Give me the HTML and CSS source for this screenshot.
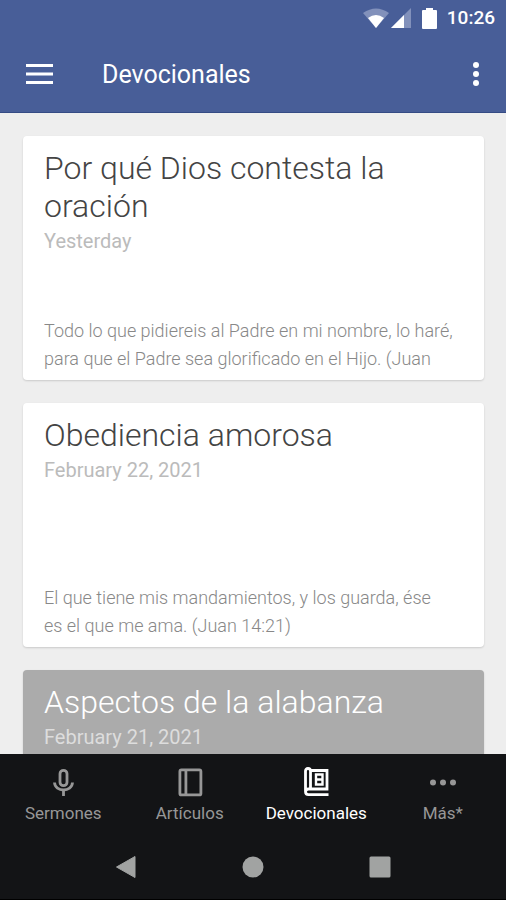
FILE: index.html
```html
<!DOCTYPE html>
<html lang="es">
<head>
<meta charset="utf-8">
<meta name="viewport" content="width=device-width, initial-scale=1">
<title>Devocionales</title>
<link rel="stylesheet" href="styles.css">
</head>
<body>
<header class="top">
  <div class="status">
    <svg class="status-wifi" viewBox="0 0 26 20" aria-hidden="true"><path d="M0 5Q13-4 26 5L13 20Z" fill="#8291bb"/><path d="M5 10Q13 4 21 10L13 20Z" fill="#fff"/></svg>
    <svg class="status-signal" viewBox="0 0 20 20" aria-hidden="true"><path d="M0 20L20 0V20Z" fill="#8291bb"/><path d="M0 20L13 7V20Z" fill="#fff"/></svg>
    <svg class="status-battery" viewBox="0 0 15 21" aria-hidden="true"><path d="M4 0H11V2H14Q15 2 15 3V20Q15 21 14 21H1Q0 21 0 20V3Q0 2 1 2H4Z" fill="#fff"/></svg>
    <span class="clock">10:26</span>
  </div>
  <div class="appbar">
    <button class="icon-button" aria-label="Menu"><svg class="icon-menu" viewBox="0 0 27 20" aria-hidden="true"><path d="M0 1.5H27M0 10H27M0 18.5H27" stroke="#fff" stroke-width="3"/></svg></button>
    <h1 class="title">Devocionales</h1>
    <button class="icon-button" aria-label="Opciones"><svg class="icon-more" viewBox="0 0 6 24" aria-hidden="true"><g fill="#fff"><circle cx="3" cy="3" r="3"/><circle cx="3" cy="12" r="3"/><circle cx="3" cy="21" r="3"/></g></svg></button>
  </div>
</header>
<main class="list">
  <article class="card">
    <h2 class="card-title">Por qué Dios contesta la oración</h2>
    <p class="card-date">Yesterday</p>
    <p class="card-text">Todo lo que pidiereis al Padre en mi nombre, lo haré, para que el Padre sea glorificado en el Hijo. (Juan</p>
  </article>
  <article class="card">
    <h2 class="card-title">Obediencia amorosa</h2>
    <p class="card-date">February 22, 2021</p>
    <p class="card-text">El que tiene mis mandamientos, y los guarda, ése<br>es el que me ama. (Juan 14:21)</p>
  </article>
  <article class="card card-dark">
    <h2 class="card-title">Aspectos de la alabanza</h2>
    <p class="card-date">February 21, 2021</p>
  </article>
</main>
<footer class="bottom">
  <nav class="tabs">
    <a class="tab" href="#sermones">
      <svg class="tab-icon" viewBox="0 0 32 32" fill="none" stroke="currentColor" stroke-width="2.800" aria-hidden="true"><rect x="13" y="4.300" width="7" height="15.400" rx="3.500"/><path d="M7.500 16.500C8 26.500 25 26.500 25.500 16.500M16.500 24V30"/></svg>
      <span>Sermones</span></a>
    <a class="tab" href="#articulos">
      <svg class="tab-icon" viewBox="0 0 32 32" fill="none" stroke="currentColor" stroke-width="2.800" aria-hidden="true"><rect x="5.900" y="3.900" width="21" height="25" rx="1.500"/><path d="M11.900 4V29"/></svg>
      <span>Artículos</span></a>
    <a class="tab tab-active" href="#devocionales">
      <svg class="tab-icon" viewBox="0 0 32 32" fill="none" stroke="currentColor" stroke-width="2.800" aria-hidden="true"><path d="M28.500 28.600H8.500Q5.500 28.600 5.500 25.500V5Q5.500 2.500 8 2.500Q10.500 2.500 10.500 5V22.500M10.500 4.500H27V23H8.500Q5.500 23 5.500 26"/><path d="M16 8.500H22.500V18.500H16ZM16 13.500H22" stroke-width="2.400"/></svg>
      <span>Devocionales</span></a>
    <a class="tab" href="#mas">
      <svg class="tab-icon" viewBox="0 0 32 32" fill="currentColor" aria-hidden="true"><circle cx="6" cy="16.500" r="3"/><circle cx="16" cy="16.500" r="3"/><circle cx="26" cy="16.500" r="3"/></svg>
      <span>Más*</span></a>
  </nav>
  <div class="system">
    <button class="system-button" aria-label="Atrás"><svg class="system-icon" viewBox="0 0 24 24" aria-hidden="true"><path d="M2.500 12L21 1.500V22.500Z" fill="currentColor" stroke="currentColor" stroke-linejoin="round"/></svg></button>
    <button class="system-button" aria-label="Inicio"><svg class="system-icon" viewBox="0 0 24 24" aria-hidden="true"><circle cx="12" cy="12" r="10.500" fill="currentColor"/></svg></button>
    <button class="system-button" aria-label="Recientes"><svg class="system-icon" viewBox="0 0 24 24" aria-hidden="true"><rect x="1.500" y="1.500" width="21" height="21" rx="1.500" fill="currentColor"/></svg></button>
  </div>
</footer>
</body>
</html>
```
FILE: styles.css
```css
* { box-sizing: border-box; }
body {
  margin: 0;
  height: 100vh;
  display: flex;
  flex-direction: column;
  background: #eee;
  font-family: Roboto, "Liberation Sans", sans-serif;
}
h1, h2, p { margin: 0; }
button { border: 0; padding: 0; background: none; color: inherit; }
svg { display: block; }

.top { flex: none; background: #485e98; color: #fff; border-bottom: 1px solid #354b84; }
.status {
  height: 36px;
  padding: 0 11px;
  display: flex;
  align-items: center;
  justify-content: flex-end;
}
.status-wifi { width: 26px; height: 20px; }
.status-signal { width: 20px; height: 20px; margin: 0 11px 0 2px; }
.status-battery { width: 15px; height: 21px; margin-right: 10px; }
.clock { font-size: 19px; font-weight: 500; line-height: 24px; }
.appbar {
  height: 76px;
  padding: 0 27px 0 26px;
  display: flex;
  align-items: center;
}
.icon-menu { width: 27px; height: 20px; }
.icon-more { width: 6px; height: 24px; }
.title { flex: 1; margin-left: 49px; padding-top: 2px; font-size: 25px; font-weight: 400; line-height: 32px; }

.list { flex: 1; min-height: 0; overflow: hidden; padding: 23px 22px 0 23px; }
.card {
  display: flex;
  flex-direction: column;
  height: 244px;
  margin-bottom: 23px;
  padding: 13px 20px 11px 21px;
  border-radius: 4px;
  background: #fff;
  box-shadow: 0 1px 2px rgba(0, 0, 0, .15);
}
.card-title { margin-bottom: 2px; font-size: 32px; font-weight: 300; line-height: 38px; color: #444; }
.card-date { font-size: 20px; line-height: 28px; color: #bbb; }
.card-text {
  height: 52px;
  margin-top: auto;
  overflow: hidden;
  font-size: 18px;
  font-weight: 300;
  line-height: 28px;
  color: #888;
}
.card-dark { background: #ababab; }
.card-dark .card-title { color: #fff; }
.card-dark .card-date { color: #ddd; }

.bottom { flex: none; background: #131416; border-bottom: 1px solid #000; }
.tabs { display: grid; grid-template-columns: repeat(4, 1fr); height: 80px; }
.tab {
  display: flex;
  flex-direction: column;
  align-items: center;
  gap: 3px;
  padding-top: 12px;
  font-size: 17px;
  line-height: 24px;
  color: #979797;
  text-decoration: none;
}
.tab-icon { width: 32px; height: 32px; }
.tab-active { color: #fff; }
.system {
  display: grid;
  grid-template-columns: repeat(3, 1fr);
  height: 65px;
  padding: 0 63px;
  color: #a1a3a2;
}
.system-button { display: flex; align-items: center; justify-content: center; }
.system-icon { width: 24px; height: 24px; }
```
